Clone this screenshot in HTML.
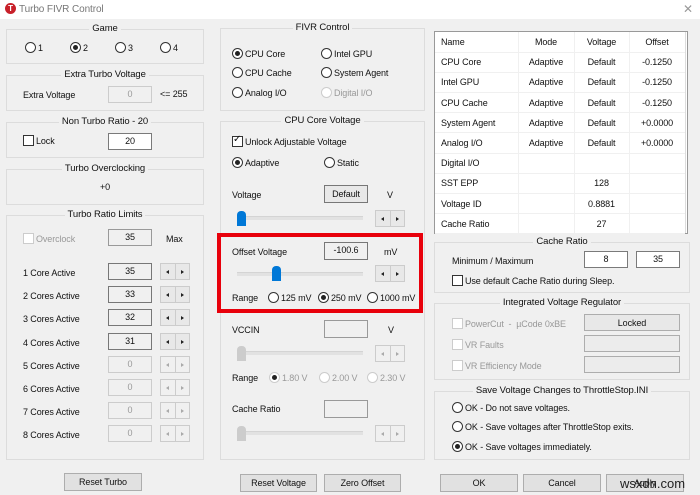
<!DOCTYPE html>
<html><head><meta charset="utf-8"><style>
*{box-sizing:border-box;margin:0;padding:0}
body{width:700px;height:495px;background:#f0f0f0;font-family:"Liberation Sans",sans-serif;font-size:9px;letter-spacing:-0.1px;color:#111;position:relative;overflow:hidden}
.a{position:absolute;white-space:nowrap}
.g{position:absolute;border:1px solid #dcdcdc}
.gt{position:absolute;top:-7px;left:0;right:0;text-align:center;font-size:9.5px}
.gt span{background:#f0f0f0;padding:0 3px}
.in{position:absolute;background:#fff;border:1px solid #7a7a7a;text-align:center;line-height:15px}
.dis{background:#f0f0f0;border-color:#ccc;color:#999}
.btn{position:absolute;background:#e1e1e1;border:1px solid #adadad;text-align:center;line-height:16px}
.r{position:absolute;width:11px;height:11px;border:1px solid #333;border-radius:50%;background:#fff}
.r.on::after{content:"";position:absolute;left:2px;top:2px;width:5px;height:5px;border-radius:50%;background:#222}
.r.d{border-color:#ccc}
.cb{position:absolute;width:11px;height:11px;border:1px solid #333;background:#fff}
.cb.d{border-color:#ccc}
.sp{position:absolute;width:30px;height:17px;border:1px solid #ccc;background:#e8e8e8}
.sp::before{content:"";position:absolute;left:14px;top:0;bottom:0;border-left:1px solid #ccc}
.sp i{position:absolute;top:6px;width:0;height:0;border-top:2.5px solid transparent;border-bottom:2.5px solid transparent}
.sp i.l{left:5px;border-right:3px solid #222}
.sp i.rr{left:20px;border-left:3px solid #222}
.sp.d{background:#f0f0f0}.sp.d i.l{border-right-color:#aaa}.sp.d i.rr{border-left-color:#aaa}
.tr{position:absolute;height:4px;background:#e2e2e2;border-top:1px solid #d4d4d4}
.th{position:absolute;width:9px;height:15px;background:#0078d7;border-radius:4px 4px 0 0}
.th.d{background:#ccc}
.gr{color:#999}
td{height:20.2px;border-bottom:1px solid #f0f0f0;padding:0}
</style></head><body>
<div class="a" style="left:0;top:0;width:700px;height:19px;background:#fff"></div>
<div class="a" style="left:5px;top:3px;width:11px;height:11px;border-radius:50%;background:#c8202a;color:#fff;font-size:8px;font-weight:bold;text-align:center;line-height:11px">T</div>
<div class="a" style="left:19px;top:4px;color:#777;font-size:10px">Turbo FIVR Control</div>
<div class="a" style="left:683px;top:2px;color:#999;font-size:12px">✕</div>

<!-- Left column -->
<div class="g" style="left:6px;top:29px;width:198px;height:35px"><div class="gt"><span>Game</span></div></div>
<div class="r" style="left:25px;top:42px"></div><div class="a" style="left:38px;top:43px">1</div>
<div class="r on" style="left:70px;top:42px"></div><div class="a" style="left:83px;top:43px">2</div>
<div class="r" style="left:115px;top:42px"></div><div class="a" style="left:128px;top:43px">3</div>
<div class="r" style="left:160px;top:42px"></div><div class="a" style="left:173px;top:43px">4</div>

<div class="g" style="left:6px;top:75px;width:198px;height:36px"><div class="gt"><span>Extra Turbo Voltage</span></div></div>
<div class="a" style="left:23px;top:90px">Extra Voltage</div>
<div class="in dis" style="left:108px;top:86px;width:44px;height:17px">0</div>
<div class="a" style="left:160px;top:89px">&lt;= 255</div>

<div class="g" style="left:6px;top:122px;width:198px;height:36px"><div class="gt"><span>Non Turbo Ratio - 20</span></div></div>
<div class="cb" style="left:23px;top:135px"></div><div class="a" style="left:36px;top:136px">Lock</div>
<div class="in" style="left:108px;top:133px;width:44px;height:17px">20</div>

<div class="g" style="left:6px;top:169px;width:198px;height:36px"><div class="gt"><span>Turbo Overclocking</span></div></div>
<div class="a" style="left:100px;top:182px">+0</div>

<div class="g" style="left:6px;top:215px;width:198px;height:245px"><div class="gt"><span>Turbo Ratio Limits</span></div></div>
<div class="cb d" style="left:23px;top:233px"></div><div class="a gr" style="left:36px;top:234px">Overclock</div>
<div class="in dis" style="left:108px;top:229px;width:44px;height:17px;color:#111;border-color:#999">35</div>
<div class="a" style="left:166px;top:234px">Max</div>

<div class="a" style="left:23px;top:268px">1 Core Active</div><div class="in dis" style="left:108px;top:263px;width:44px;height:17px;color:#111;border-color:#777">35</div><div class="sp" style="left:160px;top:263px"><i class="l"></i><i class="rr"></i></div>
<div class="a" style="left:23px;top:291px">2 Cores Active</div><div class="in dis" style="left:108px;top:286px;width:44px;height:17px;color:#111;border-color:#777">33</div><div class="sp" style="left:160px;top:286px"><i class="l"></i><i class="rr"></i></div>
<div class="a" style="left:23px;top:314px">3 Cores Active</div><div class="in dis" style="left:108px;top:309px;width:44px;height:17px;color:#111;border-color:#777">32</div><div class="sp" style="left:160px;top:309px"><i class="l"></i><i class="rr"></i></div>
<div class="a" style="left:23px;top:338px">4 Cores Active</div><div class="in dis" style="left:108px;top:333px;width:44px;height:17px;color:#111;border-color:#777">31</div><div class="sp" style="left:160px;top:333px"><i class="l"></i><i class="rr"></i></div>
<div class="a" style="left:23px;top:361px">5 Cores Active</div><div class="in dis" style="left:108px;top:356px;width:44px;height:17px">0</div><div class="sp d" style="left:160px;top:356px"><i class="l"></i><i class="rr"></i></div>
<div class="a" style="left:23px;top:384px">6 Cores Active</div><div class="in dis" style="left:108px;top:379px;width:44px;height:17px">0</div><div class="sp d" style="left:160px;top:379px"><i class="l"></i><i class="rr"></i></div>
<div class="a" style="left:23px;top:407px">7 Cores Active</div><div class="in dis" style="left:108px;top:402px;width:44px;height:17px">0</div><div class="sp d" style="left:160px;top:402px"><i class="l"></i><i class="rr"></i></div>
<div class="a" style="left:23px;top:430px">8 Cores Active</div><div class="in dis" style="left:108px;top:425px;width:44px;height:17px">0</div><div class="sp d" style="left:160px;top:425px"><i class="l"></i><i class="rr"></i></div>

<div class="btn" style="left:64px;top:473px;width:78px;height:18px">Reset Turbo</div>

<!-- Middle column -->
<div class="g" style="left:220px;top:28px;width:205px;height:83px"><div class="gt"><span>FIVR Control</span></div></div>
<div class="r on" style="left:232px;top:48px"></div><div class="a" style="left:245px;top:49px">CPU Core</div>
<div class="r" style="left:321px;top:48px"></div><div class="a" style="left:334px;top:49px">Intel GPU</div>
<div class="r" style="left:232px;top:67px"></div><div class="a" style="left:245px;top:68px">CPU Cache</div>
<div class="r" style="left:321px;top:67px"></div><div class="a" style="left:334px;top:68px">System Agent</div>
<div class="r" style="left:232px;top:87px"></div><div class="a" style="left:245px;top:88px">Analog I/O</div>
<div class="r d" style="left:321px;top:87px"></div><div class="a gr" style="left:334px;top:88px">Digital I/O</div>

<div class="g" style="left:220px;top:121px;width:205px;height:339px"><div class="gt"><span>CPU Core Voltage</span></div></div>
<div class="cb" style="left:232px;top:136px"></div><div class="a" style="left:233px;top:134px;font-size:10px;line-height:12px">✓</div><div class="a" style="left:245px;top:137px">Unlock Adjustable Voltage</div>
<div class="r on" style="left:232px;top:157px"></div><div class="a" style="left:245px;top:158px">Adaptive</div>
<div class="r" style="left:324px;top:157px"></div><div class="a" style="left:337px;top:158px">Static</div>
<div class="a" style="left:232px;top:190px">Voltage</div>
<div class="btn" style="left:324px;top:185px;width:44px;height:18px;background:#e8e8e8;border-color:#777">Default</div>
<div class="a" style="left:387px;top:190px">V</div>
<div class="tr" style="left:237px;top:216px;width:126px"></div><div class="th" style="left:237px;top:211px"></div>
<div class="sp" style="left:375px;top:210px"><i class="l"></i><i class="rr"></i></div>

<div class="a" style="left:217px;top:233px;width:206px;height:80px;border:4px solid #e8000b"></div>
<div class="a" style="left:232px;top:247px">Offset Voltage</div>
<div class="in dis" style="left:324px;top:242px;width:44px;height:18px;color:#111;border-color:#777">-100.6</div>
<div class="a" style="left:384px;top:247px">mV</div>
<div class="tr" style="left:237px;top:272px;width:126px"></div><div class="th" style="left:272px;top:266px"></div>
<div class="sp" style="left:375px;top:265px"><i class="l"></i><i class="rr"></i></div>
<div class="a" style="left:232px;top:293px">Range</div>
<div class="r" style="left:268px;top:292px"></div><div class="a" style="left:281px;top:293px">125 mV</div>
<div class="r on" style="left:318px;top:292px"></div><div class="a" style="left:331px;top:293px">250 mV</div>
<div class="r" style="left:367px;top:292px"></div><div class="a" style="left:380px;top:293px">1000 mV</div>

<div class="a" style="left:232px;top:325px">VCCIN</div>
<div class="in dis" style="left:324px;top:320px;width:44px;height:18px;border-color:#999"></div>
<div class="a" style="left:388px;top:325px">V</div>
<div class="tr" style="left:237px;top:351px;width:126px"></div><div class="th d" style="left:237px;top:346px"></div>
<div class="sp d" style="left:375px;top:345px"><i class="l"></i><i class="rr"></i></div>
<div class="a" style="left:232px;top:373px">Range</div>
<div class="r d on" style="left:269px;top:372px"></div><div class="a gr" style="left:282px;top:373px">1.80 V</div>
<div class="r d" style="left:319px;top:372px"></div><div class="a gr" style="left:332px;top:373px">2.00 V</div>
<div class="r d" style="left:367px;top:372px"></div><div class="a gr" style="left:380px;top:373px">2.30 V</div>
<div class="a" style="left:232px;top:404px">Cache Ratio</div>
<div class="in dis" style="left:324px;top:400px;width:44px;height:18px;border-color:#999"></div>
<div class="tr" style="left:237px;top:431px;width:126px"></div><div class="th d" style="left:237px;top:426px"></div>
<div class="sp d" style="left:375px;top:425px"><i class="l"></i><i class="rr"></i></div>

<div class="btn" style="left:240px;top:474px;width:77px;height:18px">Reset Voltage</div>
<div class="btn" style="left:324px;top:474px;width:77px;height:18px">Zero Offset</div>

<!-- Right column -->
<div class="a" style="left:434px;top:31px;width:254px;height:203px;background:#fff;border:1px solid #999">
<div class="a" style="left:83px;top:0;bottom:0;border-left:1px solid #f0f0f0"></div>
<div class="a" style="left:139px;top:0;bottom:0;border-left:1px solid #f0f0f0"></div>
<div class="a" style="left:194px;top:0;bottom:0;border-left:1px solid #f0f0f0"></div>
<div class="a" style="left:250px;top:0;bottom:0;border-left:1px solid #ddd"></div>
<table style="position:absolute;left:0;top:0;width:250px;border-collapse:collapse;font-size:9px">
<colgroup><col style="width:83px"><col style="width:56px"><col style="width:55px"><col style="width:56px"></colgroup>
<tr><td style="padding-left:6px">Name</td><td align="center">Mode</td><td align="center">Voltage</td><td align="center">Offset</td></tr>
<tr><td style="padding-left:6px">CPU Core</td><td align="center">Adaptive</td><td align="center">Default</td><td align="center">-0.1250</td></tr>
<tr><td style="padding-left:6px">Intel GPU</td><td align="center">Adaptive</td><td align="center">Default</td><td align="center">-0.1250</td></tr>
<tr><td style="padding-left:6px">CPU Cache</td><td align="center">Adaptive</td><td align="center">Default</td><td align="center">-0.1250</td></tr>
<tr><td style="padding-left:6px">System Agent</td><td align="center">Adaptive</td><td align="center">Default</td><td align="center">+0.0000</td></tr>
<tr><td style="padding-left:6px">Analog I/O</td><td align="center">Adaptive</td><td align="center">Default</td><td align="center">+0.0000</td></tr>
<tr><td style="padding-left:6px">Digital I/O</td><td></td><td></td><td></td></tr>
<tr><td style="padding-left:6px">SST EPP</td><td></td><td align="center">128</td><td></td></tr>
<tr><td style="padding-left:6px">Voltage ID</td><td></td><td align="center">0.8881</td><td></td></tr>
<tr><td style="padding-left:6px">Cache Ratio</td><td></td><td align="center">27</td><td></td></tr>
</table></div>

<div class="g" style="left:434px;top:242px;width:256px;height:51px"><div class="gt"><span>Cache Ratio</span></div></div>
<div class="a" style="left:452px;top:256px">Minimum / Maximum</div>
<div class="in" style="left:584px;top:251px;width:44px;height:17px">8</div>
<div class="in" style="left:636px;top:251px;width:44px;height:17px">35</div>
<div class="cb" style="left:452px;top:275px"></div><div class="a" style="left:465px;top:276px">Use default Cache Ratio during Sleep.</div>

<div class="g" style="left:434px;top:303px;width:256px;height:77px"><div class="gt"><span>Integrated Voltage Regulator</span></div></div>
<div class="cb d" style="left:452px;top:318px"></div><div class="a gr" style="left:465px;top:319px">PowerCut &nbsp;- &nbsp;µCode 0xBE</div>
<div class="btn" style="left:584px;top:314px;width:96px;height:17px;background:#e8e8e8">Locked</div>
<div class="cb d" style="left:452px;top:339px"></div><div class="a gr" style="left:465px;top:340px">VR Faults</div>
<div class="btn" style="left:584px;top:335px;width:96px;height:17px;background:#ececec"></div>
<div class="cb d" style="left:452px;top:360px"></div><div class="a gr" style="left:465px;top:361px">VR Efficiency Mode</div>
<div class="btn" style="left:584px;top:356px;width:96px;height:17px;background:#ececec"></div>

<div class="g" style="left:434px;top:391px;width:256px;height:69px"><div class="gt"><span>Save Voltage Changes to ThrottleStop.INI</span></div></div>
<div class="r" style="left:452px;top:402px"></div><div class="a" style="left:465px;top:403px">OK - Do not save voltages.</div>
<div class="r" style="left:452px;top:421px"></div><div class="a" style="left:465px;top:422px">OK - Save voltages after ThrottleStop exits.</div>
<div class="r on" style="left:452px;top:441px"></div><div class="a" style="left:465px;top:442px">OK - Save voltages immediately.</div>

<div class="btn" style="left:440px;top:474px;width:78px;height:18px">OK</div>
<div class="btn" style="left:523px;top:474px;width:78px;height:18px">Cancel</div>
<div class="btn" style="left:606px;top:474px;width:78px;height:18px">Apply</div>
<div class="a" style="left:620px;top:476px;font-size:13px;letter-spacing:0;color:#222">wsxdn.com</div>
</body></html>
